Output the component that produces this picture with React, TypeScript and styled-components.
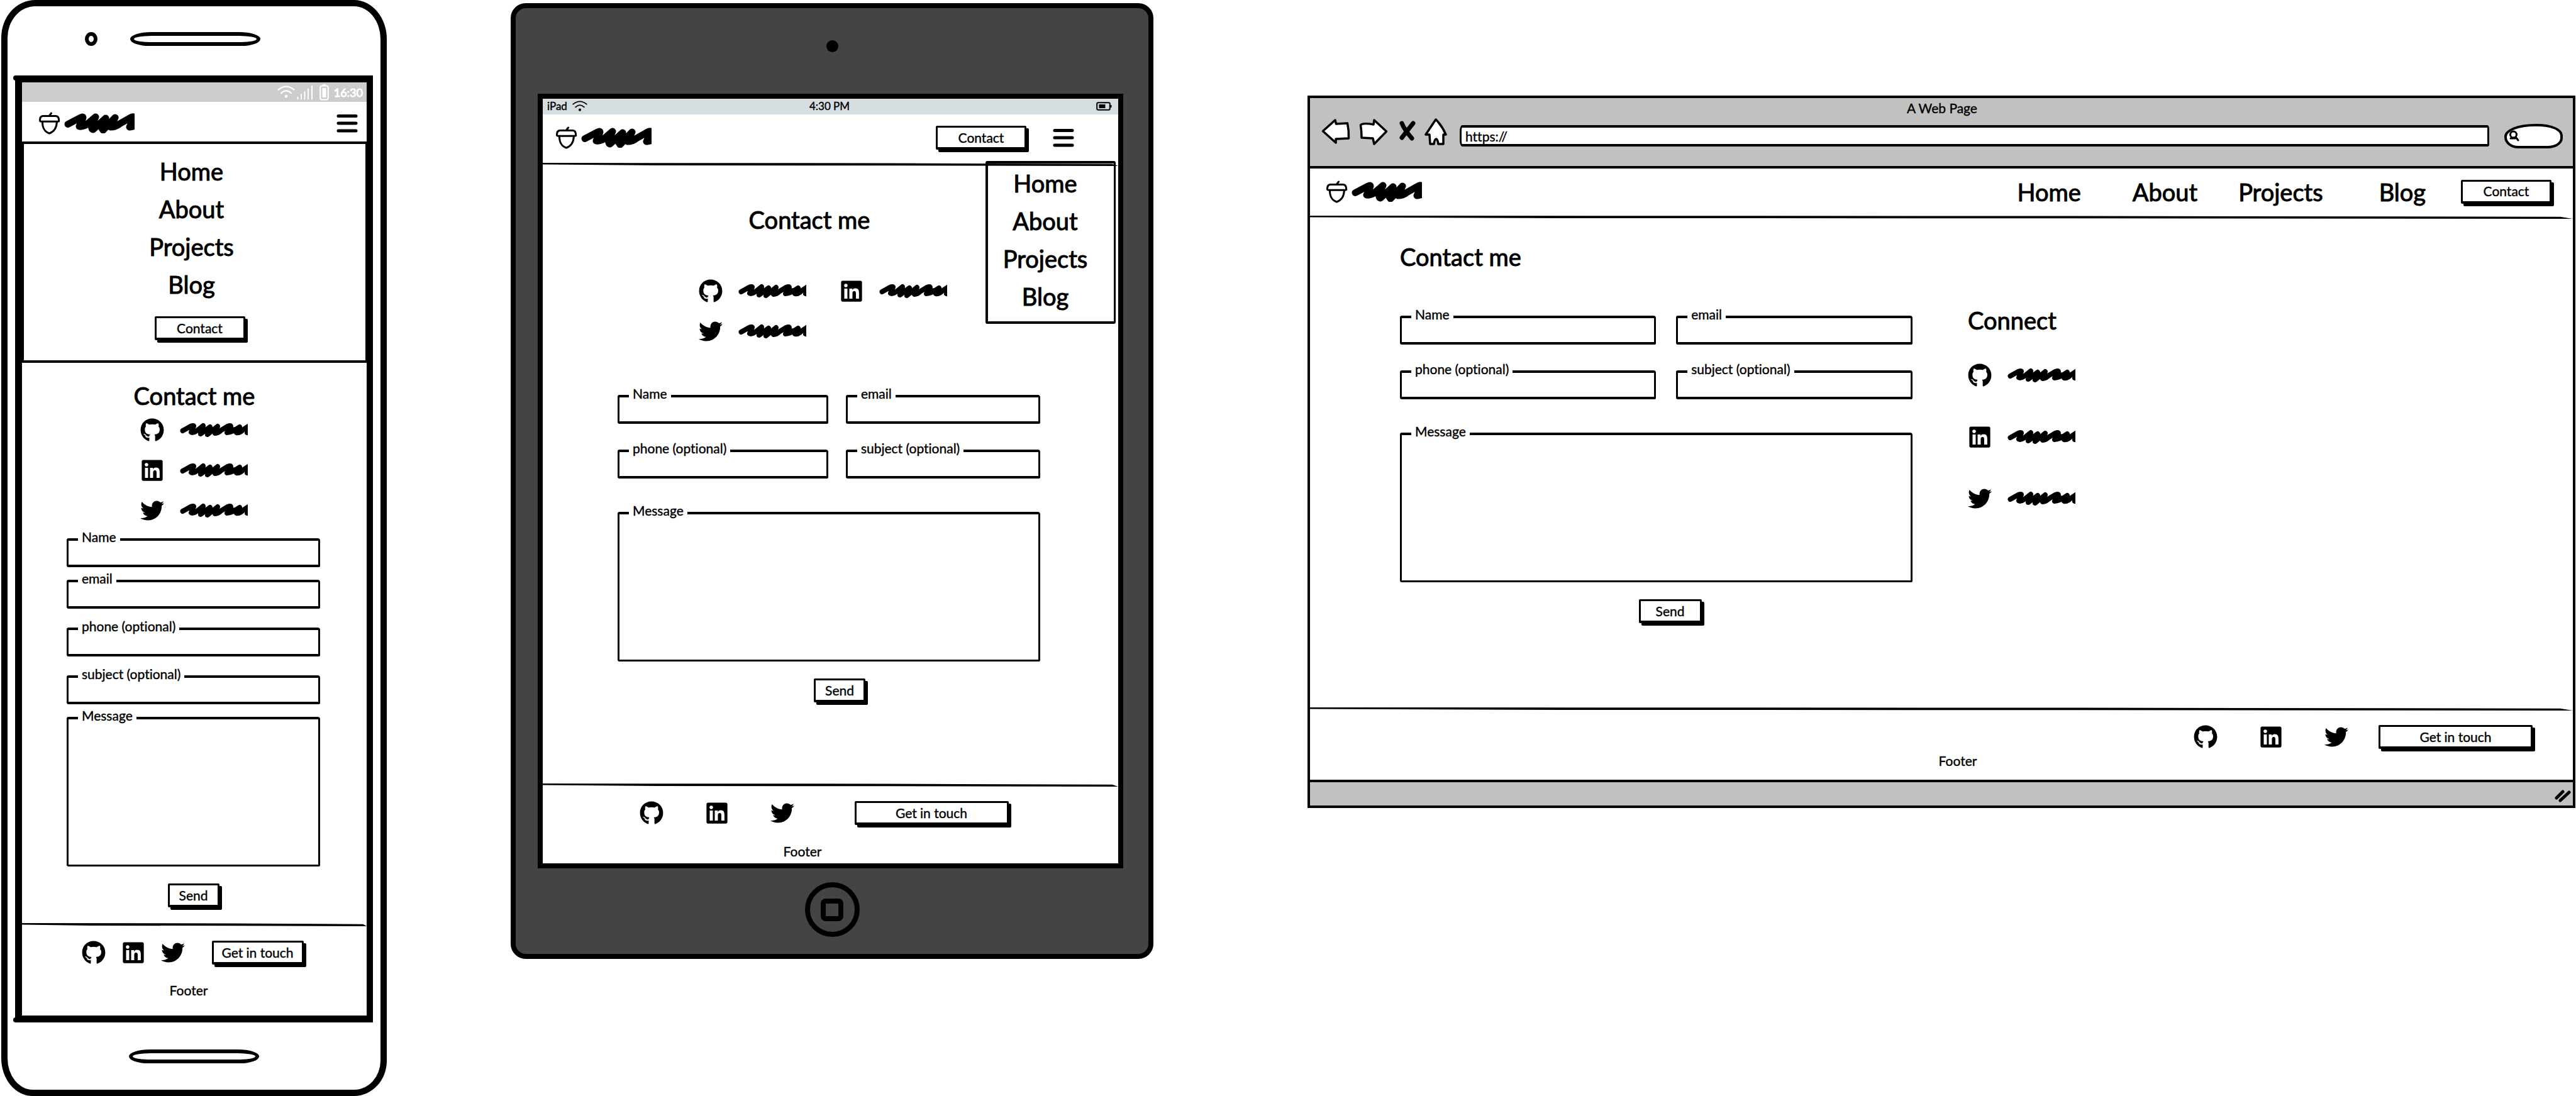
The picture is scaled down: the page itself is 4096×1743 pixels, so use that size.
import React, { useId } from "react";
import styled, { createGlobalStyle } from "styled-components";
import { FaGithub, FaLinkedin, FaTwitter } from "react-icons/fa";

const ink = "#000";
const paper = "#fff";

const GlobalStyle = createGlobalStyle`
  *, *::before, *::after { box-sizing: border-box; }
  body {
    margin: 0;
    background: ${paper};
    color: ${ink};
    font-family: Lato, "Open Sans", sans-serif;
    font-size: 21px;
    font-weight: 400;
    line-height: 24px;
    font-variant-ligatures: none;
    -webkit-text-stroke: 0.4px currentColor;
  }
  input, textarea, button { font: inherit; color: inherit; margin: 0; font-variant-ligatures: none; -webkit-text-stroke: inherit; }
`;

/* ---------- drawings ---------- */

const AcornIcon = () => (
  <svg width="34" height="36" viewBox="0 0 34 36" fill="none" stroke={ink} strokeWidth="3" strokeLinecap="round" strokeLinejoin="round" aria-hidden="true">
    <path d="M19.5 2L16.5 6" />
    <path d="M6 6.5H27Q32 7 31.7 14.8Q31 15.5 28 15.2H5Q2 15.6 1.6 14.5Q1 7 6 6.5Z" />
    <path d="M5.5 16C5.5 25 8 31 16.5 34.2C25 31 28 25 28.4 16" />
  </svg>
);

const LogoScribble = () => (
  <svg width="112" height="32" viewBox="0 0 112 32" fill="none" stroke={ink} strokeWidth="11" strokeLinecap="round" strokeLinejoin="round" aria-hidden="true">
    <path d="M6 17.500L26 7Q32 4 29 10L24 21Q28 22 36 18L50 6L44 19Q43 25 46 26L66 8L60 24L62 27L81 7L74 22Q82 22 88 17L104 8Q112 3 110 9L104 22Q106 22 120 18" />
    <path d="M48 18H78M109 8V19" />
  </svg>
);

const LinkScribble = () => (
  <svg width="108" height="24" viewBox="0 0 108 24" fill="none" stroke={ink} strokeWidth="8" strokeLinecap="round" strokeLinejoin="round" aria-hidden="true">
    <path d="M4.500 13L18 5.500Q24 3.500 21 8L18 15.500Q21 17 27 13L37 5L33 18L48 7L44 19L60 6L56 17Q61 17 66 12L76 6Q83 3 80 8L75 16Q82 16 95 7L90 16Q96 17 101 11L112 4L107 16" />
    <path d="M36 13H56M80 11L94 12" />
  </svg>
);

const WifiIcon = ({ size, color }: { size: number; color: string }) => (
  <svg width={size} height={size * 0.72} viewBox="0 0 28 20" fill="none" stroke={color} strokeWidth="2.2" strokeLinecap="round" aria-hidden="true">
    <path d="M1.500 6.500Q14 -3.500 26.500 6.500" />
    <path d="M6 12Q14 4.500 22 12" />
    <circle cx="14" cy="17" r="2.400" fill={color} stroke="none" />
  </svg>
);

const SignalIcon = () => (
  <svg width="26" height="24" viewBox="0 0 26 24" stroke="#fff" strokeWidth="2" strokeLinecap="round" aria-hidden="true">
    <path d="M1.500 19.500V22.500M7 15V22.500M12.500 11V22.500M18 6.500V22.500M24 2V22.500" />
  </svg>
);

const PhoneBattery = () => (
  <svg width="15" height="26" viewBox="0 0 15 26" aria-hidden="true">
    <path d="M5 1H10" stroke="#fff" strokeWidth="2" />
    <rect x="1.200" y="2.500" width="12.600" height="22" rx="3" fill="none" stroke="#fff" strokeWidth="2.200" />
    <rect x="4.500" y="6" width="6" height="15" fill="#fff" />
  </svg>
);

const TabletBattery = () => (
  <svg width="25" height="14" viewBox="0 0 25 14" aria-hidden="true">
    <rect x="1.200" y="1.200" width="20.600" height="11.600" rx="2" fill="none" stroke={ink} strokeWidth="2" />
    <rect x="4.500" y="4" width="10" height="6" fill={ink} />
    <path d="M23.500 5V9" stroke={ink} strokeWidth="2" />
  </svg>
);

const BurgerIcon = () => (
  <svg width="34" height="30" viewBox="0 0 34 30" stroke={ink} strokeWidth="5" strokeLinecap="round" aria-hidden="true">
    <path d="M3 3.500H31M3 15H31M3 27H31" />
  </svg>
);

const BackIcon = () => (
  <svg width="46" height="56" viewBox="0 0 46 56" fill={paper} stroke={ink} strokeWidth="3.500" strokeLinejoin="round" aria-hidden="true">
    <path d="M22 3L2.500 20.500L23 39V33L43.500 32Q44 20 41.500 8L23.500 9Z" />
  </svg>
);

const ForwardIcon = () => (
  <svg width="46" height="56" viewBox="0 0 46 56" fill={paper} stroke={ink} strokeWidth="3.500" strokeLinejoin="round" aria-hidden="true">
    <path d="M24 3L43.500 21L24 41L22 32L4 31Q4 20 2.500 11Q5 7 23 10Z" />
  </svg>
);

const StopIcon = () => (
  <svg width="26" height="56" viewBox="0 0 26 56" fill="none" stroke={ink} strokeWidth="7" strokeLinecap="round" aria-hidden="true">
    <path d="M4 8Q8 18 20 32M22 8Q14 18 4 31" />
  </svg>
);

const HomeIcon = () => (
  <svg width="36" height="56" viewBox="0 0 36 56" fill={paper} stroke={ink} strokeWidth="3.500" strokeLinejoin="round" aria-hidden="true">
    <path d="M18 2Q10 14 2 26H8L9 41H15Q16 33 19 33Q21 34 22 41H30V26H34Q28 12 18 2Z" />
  </svg>
);

const MagnifierIcon = () => (
  <svg width="17" height="18" viewBox="0 0 17 18" fill="none" stroke={ink} strokeWidth="3" strokeLinecap="round" aria-hidden="true">
    <ellipse cx="7.500" cy="7" rx="5" ry="5" />
    <path d="M3 13H10M11 11L15 16" />
  </svg>
);

const GripIcon = () => (
  <svg width="28" height="22" viewBox="0 0 28 22" stroke={ink} strokeWidth="5" strokeLinecap="round" aria-hidden="true">
    <path d="M4 14L14 4M10 18L24 5" />
  </svg>
);

/* ---------- shared parts ---------- */

const Rule = styled.div`
  height: 5px;
  background: ${ink};
  clip-path: polygon(0 0, 60% 10%, 99% 35%, 100% 100%, 60% 85%, 20% 80%, 0 50%);
`;

const Heading = styled.h2<{ $shift?: number }>`
  margin: 0;
  padding-right: ${(p) => p.$shift ?? 0}px;
  font-size: 38px;
  font-weight: inherit;
  line-height: 46px;
  text-align: inherit;
  -webkit-text-stroke: 1px currentColor;
`;

const Button = styled.button<{ $width: number }>`
  flex: none;
  width: ${(p) => p.$width}px;
  height: 38px;
  padding: 0;
  border: 3px solid ${ink};
  border-bottom-width: 4px;
  border-radius: 2px;
  background: ${paper};
  box-shadow: 4px 4px 0 ${ink};
  line-height: 24px;
  white-space: nowrap;
`;

const IconButton = styled.button`
  display: flex;
  flex: none;
  padding: 0;
  border: 0;
  background: none;
`;

const LogoLink = styled.a`
  display: flex;
  align-items: center;
  gap: 6px;
`;

const Logo = () => (
  <LogoLink href="#home" aria-label="Home page">
    <AcornIcon />
    <LogoScribble />
  </LogoLink>
);

const MenuLink = styled.a<{ $after?: number }>`
  margin-right: ${(p) => p.$after ?? 0}px;
  color: inherit;
  font-size: 38px;
  line-height: 60px;
  text-decoration: none;
  -webkit-text-stroke: 1px currentColor;
`;

const SocialLink = styled.a`
  display: flex;
  flex: none;
  align-items: center;
  gap: 25px;
  color: inherit;
  font-size: 38px;
  line-height: 0;
`;

const networks = [
  { name: "GitHub", Icon: FaGithub },
  { name: "LinkedIn", Icon: FaLinkedin },
  { name: "Twitter", Icon: FaTwitter },
];

const SocialGrid = styled.div<{ $columns: number; $gap: number }>`
  display: grid;
  grid-template-columns: repeat(${(p) => p.$columns}, 172px);
  gap: ${(p) => p.$gap}px 52px;
`;

const Socials = ({ columns = 1, gap = 26 }: { columns?: number; gap?: number }) => (
  <SocialGrid $columns={columns} $gap={gap}>
    {networks.map(({ name, Icon }) => (
      <SocialLink key={name} href="#social" aria-label={name}>
        <Icon />
        <LinkScribble />
      </SocialLink>
    ))}
  </SocialGrid>
);

/* ---------- form ---------- */

const FieldBox = styled.div<{ $wide?: boolean; $top?: number }>`
  position: relative;
  display: flex;
  grid-column: ${(p) => (p.$wide ? "1 / -1" : "auto")};
  margin-top: ${(p) => p.$top ?? 0}px;
`;

const FieldLabel = styled.label`
  position: absolute;
  top: -14px;
  left: 18px;
  padding: 0 6px;
  background: ${paper};
`;

const Input = styled.input`
  width: 100%;
  height: 46px;
  padding: 8px 16px;
  border: 4px solid ${ink};
  border-left-width: 3px;
  border-right-width: 3px;
  border-radius: 3px 4px 2px 3px;
  background: ${paper};
`;

const TextArea = styled.textarea`
  width: 100%;
  height: 238px;
  padding: 16px;
  border: 3px solid ${ink};
  border-top-width: 4px;
  border-radius: 3px 4px 2px 3px;
  background: ${paper};
  resize: none;
`;

const Field = ({ label, wide, top, area }: { label: string; wide?: boolean; top?: number; area?: boolean }) => {
  const id = useId();
  return (
    <FieldBox $wide={wide} $top={top}>
      {area ? <TextArea id={id} /> : <Input id={id} type="text" />}
      <FieldLabel htmlFor={id}>{label}</FieldLabel>
    </FieldBox>
  );
};

const Form = styled.form<{ $gap: number }>`
  display: grid;
  grid-template-columns: 13fr 12fr;
  column-gap: ${(p) => p.$gap}px;
`;

const StackedForm = styled.form`
  display: flex;
  flex-direction: column;
  padding: 25px 74px 0 71px;
`;

const SendRow = styled.div<{ $shift?: number }>`
  grid-column: 1 / -1;
  display: flex;
  justify-content: center;
  padding: 27px 0 0 ${(p) => p.$shift ?? 0}px;
`;

const TwoColumnForm = ({ gap, shift, sendWidth }: { gap: number; shift: number; sendWidth: number }) => (
  <Form $gap={gap}>
    <Field label="Name" />
    <Field label="email" />
    <Field label="phone (optional)" top={41} />
    <Field label="subject (optional)" top={41} />
    <Field label="Message" wide area top={53} />
    <SendRow $shift={shift}>
      <Button type="button" $width={sendWidth}>Send</Button>
    </SendRow>
  </Form>
);

/* ---------- footer ---------- */

const FooterRow = styled.div<{ $align: string; $gap: number; $right: number }>`
  display: flex;
  align-items: center;
  justify-content: ${(p) => p.$align};
  gap: ${(p) => p.$gap}px;
  padding: 23px ${(p) => p.$right}px 0 0;
`;

const ButtonSlot = styled.div<{ $before: number }>`
  display: flex;
  margin-left: ${(p) => p.$before}px;
`;

const FooterText = styled.p<{ $top: number; $bottom: number; $left?: number; $right?: number }>`
  margin: 0;
  padding: ${(p) => `${p.$top}px ${p.$right ?? 0}px ${p.$bottom}px ${p.$left ?? 0}px`};
  text-align: center;
`;

type FooterProps = { align: string; gap: number; right: number; before: number; width: number };

const FooterLinks = ({ align, gap, right, before, width }: FooterProps) => (
  <FooterRow $align={align} $gap={gap} $right={right}>
    {networks.map(({ name, Icon }) => (
      <SocialLink key={name} href="#social" aria-label={name}>
        <Icon />
      </SocialLink>
    ))}
    <ButtonSlot $before={before}>
      <Button type="button" $width={width}>Get in touch</Button>
    </ButtonSlot>
  </FooterRow>
);

/* ---------- phone ---------- */

const PhoneBody = styled.section`
  grid-column: 1;
  border: 10px solid ${ink};
  border-radius: 54px 52px 52px 50px / 60px 62px 56px 60px;
  background: ${paper};
`;

const PhoneTop = styled.div`
  display: grid;
  grid-template-columns: 1fr auto 1fr;
  align-items: center;
  height: 110px;
  padding: 0 0 6px 4px;
`;

const PhoneLens = styled.span`
  justify-self: end;
  width: 20px;
  height: 22px;
  margin-right: 52px;
  border: 6px solid ${ink};
  border-radius: 50%;
`;

const Speaker = styled.span`
  display: block;
  width: 207px;
  height: 22px;
  border: 6px solid ${ink};
  border-radius: 34px 34px 30px 30px / 11px;
`;

const PhoneBottom = styled.div`
  display: flex;
  align-items: center;
  justify-content: center;
  height: 107px;
`;

const PhoneScreen = styled.div`
  position: relative;
  margin: 0 12px;
  border: 11px solid ${ink};
  border-right-width: 10px;

  &::before,
  &::after {
    content: "";
    position: absolute;
    left: -14px;
    width: 10px;
    height: 8px;
    border-radius: 4px;
    background: ${ink};
  }
  &::before { top: -11px; }
  &::after { bottom: -11px; }
`;

const PhoneStatus = styled.div`
  display: flex;
  align-items: center;
  justify-content: flex-end;
  height: 31px;
  padding-right: 6px;
  background: #ccc;
  color: #fff;
  font-size: 18px;
  -webkit-text-stroke: 1px currentColor;
`;

const StatusGap = styled.span<{ $width: number }>`
  width: ${(p) => p.$width}px;
`;

const PhoneHeader = styled.header`
  display: flex;
  align-items: center;
  justify-content: space-between;
  height: 63px;
  padding: 4px 14px 0 27px;
`;

const PhoneMenu = styled.nav`
  display: flex;
  flex-direction: column;
  align-items: center;
  padding: 13px 10px 32px 0;
  border: 4px solid ${ink};
  border-left-width: 3px;
  border-right-width: 2px;
`;

const PhoneMenuButton = styled.div`
  display: flex;
  padding: 21px 0 0 26px;
`;

const PhoneMain = styled.main`
  padding: 29px 0 25px;
  text-align: center;
`;

const PhoneSocials = styled.div`
  display: flex;
  justify-content: center;
  padding-top: 13px;
`;

const Phone = () => (
  <PhoneBody>
    <PhoneTop>
      <PhoneLens />
      <Speaker />
    </PhoneTop>
    <PhoneScreen>
      <PhoneStatus>
        <WifiIcon size={28} color="#fff" />
        <StatusGap $width={3} />
        <SignalIcon />
        <StatusGap $width={10} />
        <PhoneBattery />
        <StatusGap $width={8} />
        16:30
      </PhoneStatus>
      <PhoneHeader>
        <Logo />
        <IconButton type="button" aria-label="Menu"><BurgerIcon /></IconButton>
      </PhoneHeader>
      <PhoneMenu>
        <MenuLink href="#home">Home</MenuLink>
        <MenuLink href="#about">About</MenuLink>
        <MenuLink href="#projects">Projects</MenuLink>
        <MenuLink href="#blog">Blog</MenuLink>
        <PhoneMenuButton>
          <Button type="button" $width={144}>Contact</Button>
        </PhoneMenuButton>
      </PhoneMenu>
      <PhoneMain>
        <Heading>Contact me</Heading>
        <PhoneSocials><Socials /></PhoneSocials>
        <StackedForm>
          <Field label="Name" />
          <Field label="email" top={20} />
          <Field label="phone (optional)" top={30} />
          <Field label="subject (optional)" top={30} />
          <Field label="Message" area top={20} />
          <SendRow>
            <Button type="button" $width={82}>Send</Button>
          </SendRow>
        </StackedForm>
      </PhoneMain>
      <Rule />
      <footer>
        <FooterLinks align="center" gap={25} right={6} before={18} width={146} />
        <FooterText $top={29} $bottom={28} $right={18}>Footer</FooterText>
      </footer>
    </PhoneScreen>
    <PhoneBottom><Speaker /></PhoneBottom>
  </PhoneBody>
);

/* ---------- tablet ---------- */

const TabletBody = styled.section`
  grid-column: 3;
  margin-top: 5px;
  border: 8px solid ${ink};
  border-radius: 24px;
  background: #444;
`;

const TabletTop = styled.div`
  display: flex;
  justify-content: center;
  padding: 51px 0 66px;
`;

const TabletLens = styled.span`
  width: 19px;
  height: 19px;
  border-radius: 50%;
  background: ${ink};
`;

const TabletScreen = styled.div`
  margin: 0 40px 0 35px;
  border: 8px solid ${ink};
  background: ${paper};
`;

const TabletStatus = styled.div`
  display: grid;
  grid-template-columns: 1fr auto 1fr;
  align-items: center;
  height: 25px;
  padding: 0 10px 2px 7px;
  background: #d6dde0;
  font-size: 17px;
  line-height: 20px;
`;

const StatusSide = styled.div<{ $end?: boolean }>`
  display: flex;
  align-items: center;
  justify-content: ${(p) => (p.$end ? "flex-end" : "flex-start")};
  gap: 8px;
`;

const TabletHeader = styled.header`
  position: relative;
  display: flex;
  align-items: center;
  justify-content: space-between;
  height: 77px;
  padding: 0 70px 3px 21px;
`;

const HeaderTools = styled.div`
  display: flex;
  align-items: center;
  gap: 42px;
`;

const Dropdown = styled.nav`
  position: absolute;
  top: 74px;
  right: 4px;
  display: flex;
  flex-direction: column;
  align-items: center;
  width: 207px;
  padding: 1px 18px 10px 0;
  border: 4px solid ${ink};
  border-right-width: 3px;
  border-radius: 3px;
`;

const TabletMain = styled.main`
  padding: 62px 124px 129px 119px;
  text-align: center;
`;

const TabletSocials = styled.div`
  display: flex;
  justify-content: center;
  padding: 72px 19px 82px 0;
`;

const HomeKey = styled.div`
  display: flex;
  align-items: center;
  justify-content: center;
  width: 87px;
  height: 87px;
  margin: 22px auto 27px;
  border: 8px solid ${ink};
  border-radius: 50%;
`;

const HomeKeySquare = styled.span`
  width: 36px;
  height: 36px;
  border: 8px solid ${ink};
  border-radius: 8px;
`;

const Tablet = () => (
  <TabletBody>
    <TabletTop><TabletLens /></TabletTop>
    <TabletScreen>
      <TabletStatus>
        <StatusSide>iPad <WifiIcon size={24} color={ink} /></StatusSide>
        <span>4:30 PM</span>
        <StatusSide $end><TabletBattery /></StatusSide>
      </TabletStatus>
      <TabletHeader>
        <Logo />
        <HeaderTools>
          <Button type="button" $width={144}>Contact</Button>
          <IconButton type="button" aria-label="Menu"><BurgerIcon /></IconButton>
        </HeaderTools>
        <Dropdown>
          <MenuLink href="#home">Home</MenuLink>
          <MenuLink href="#about">About</MenuLink>
          <MenuLink href="#projects">Projects</MenuLink>
          <MenuLink href="#blog">Blog</MenuLink>
        </Dropdown>
      </TabletHeader>
      <Rule />
      <TabletMain>
        <Heading $shift={62}>Contact me</Heading>
        <TabletSocials><Socials columns={2} /></TabletSocials>
        <TwoColumnForm gap={28} shift={34} sendWidth={82} />
      </TabletMain>
      <Rule />
      <footer>
        <FooterLinks align="center" gap={66} right={21} before={30} width={245} />
        <FooterText $top={30} $bottom={7} $right={89}>Footer</FooterText>
      </footer>
    </TabletScreen>
    <HomeKey><HomeKeySquare /></HomeKey>
  </TabletBody>
);

/* ---------- desktop browser ---------- */

const BrowserBody = styled.section`
  grid-column: 5;
  margin-top: 152px;
  border: 4px solid ${ink};
  background: ${paper};
`;

const Chrome = styled.div`
  padding: 4px 16px 16px 18px;
  background: #c1c1c1;
`;

const ChromeTitle = styled.div`
  text-align: center;
`;

const Toolbar = styled.div`
  display: flex;
  align-items: center;
  height: 64px;
`;

const ToolSlot = styled.span<{ $after: number }>`
  display: flex;
  margin-right: ${(p) => p.$after}px;
`;

const AddressInput = styled.input`
  flex: 1;
  min-width: 0;
  height: 34px;
  padding: 0 6px;
  border: 4px solid ${ink};
  border-left-width: 3px;
  border-right-width: 3px;
  border-radius: 4px 3px 3px 4px / 10px 6px 3px 10px;
  background: ${paper};
`;

const SearchBox = styled.label`
  display: flex;
  flex: none;
  align-items: center;
  width: 93px;
  height: 39px;
  margin-left: 24px;
  padding-left: 3px;
  border: 4px solid ${ink};
  border-radius: 48px 40px 24px 22px / 20px 18px 16px 18px;
  background: ${paper};
`;

const SearchInput = styled.input`
  width: 50px;
  height: 24px;
  padding: 0;
  border: 0;
  background: none;
`;

const ChromeEdge = styled.div`
  height: 4px;
  background: ${ink};
`;

const BrowserHeader = styled.header`
  display: flex;
  align-items: center;
  justify-content: space-between;
  height: 75px;
  padding: 0 34px 2px 26px;
`;

const BrowserNav = styled.nav`
  display: flex;
  align-items: center;
`;

const BrowserMain = styled.main`
  display: grid;
  grid-template-columns: 815fr 962fr;
  column-gap: 88px;
  padding: 37px 0 134px 143px;
`;

const FormColumn = styled.div`
  display: flex;
  flex-direction: column;
  gap: 71px;
`;

const ConnectColumn = styled.aside`
  display: flex;
  flex-direction: column;
  gap: 46px;
  padding-top: 101px;
`;

const BottomBar = styled.div`
  display: flex;
  align-items: center;
  justify-content: flex-end;
  height: 37px;
  padding: 6px 2px 0 0;
  background: #c1c1c1;
`;

const Browser = () => (
  <BrowserBody>
    <Chrome>
      <ChromeTitle>A Web Page</ChromeTitle>
      <Toolbar>
        <ToolSlot $after={14}><IconButton type="button" aria-label="Back"><BackIcon /></IconButton></ToolSlot>
        <ToolSlot $after={18}><IconButton type="button" aria-label="Forward"><ForwardIcon /></IconButton></ToolSlot>
        <ToolSlot $after={14}><IconButton type="button" aria-label="Stop"><StopIcon /></IconButton></ToolSlot>
        <ToolSlot $after={20}><IconButton type="button" aria-label="Home"><HomeIcon /></IconButton></ToolSlot>
        <AddressInput type="text" aria-label="Address" defaultValue="https://" />
        <SearchBox>
          <MagnifierIcon />
          <SearchInput type="text" aria-label="Search" />
        </SearchBox>
      </Toolbar>
    </Chrome>
    <ChromeEdge />
    <BrowserHeader>
      <Logo />
      <BrowserNav>
        <MenuLink href="#home" $after={82}>Home</MenuLink>
        <MenuLink href="#about" $after={65}>About</MenuLink>
        <MenuLink href="#projects" $after={89}>Projects</MenuLink>
        <MenuLink href="#blog" $after={56}>Blog</MenuLink>
        <Button type="button" $width={144}>Contact</Button>
      </BrowserNav>
    </BrowserHeader>
    <Rule />
    <BrowserMain>
      <FormColumn>
        <Heading>Contact me</Heading>
        <TwoColumnForm gap={32} shift={44} sendWidth={100} />
      </FormColumn>
      <ConnectColumn>
        <Heading>Connect</Heading>
        <Socials gap={60} />
      </ConnectColumn>
    </BrowserMain>
    <Rule />
    <footer>
      <FooterLinks align="flex-end" gap={66} right={64} before={-18} width={245} />
      <FooterText $top={7} $bottom={18} $left={52}>Footer</FooterText>
    </footer>
    <ChromeEdge />
    <BottomBar><GripIcon /></BottomBar>
  </BrowserBody>
);

/* ---------- board ---------- */

const Board = styled.div`
  display: grid;
  grid-template-columns: 613fr 197px 1022fr 245px 2016fr;
  align-items: start;
  padding: 0 1px 0 2px;
`;

export default function App() {
  return (
    <>
      <GlobalStyle />
      <Board>
        <Phone />
        <Tablet />
        <Browser />
      </Board>
    </>
  );
}
